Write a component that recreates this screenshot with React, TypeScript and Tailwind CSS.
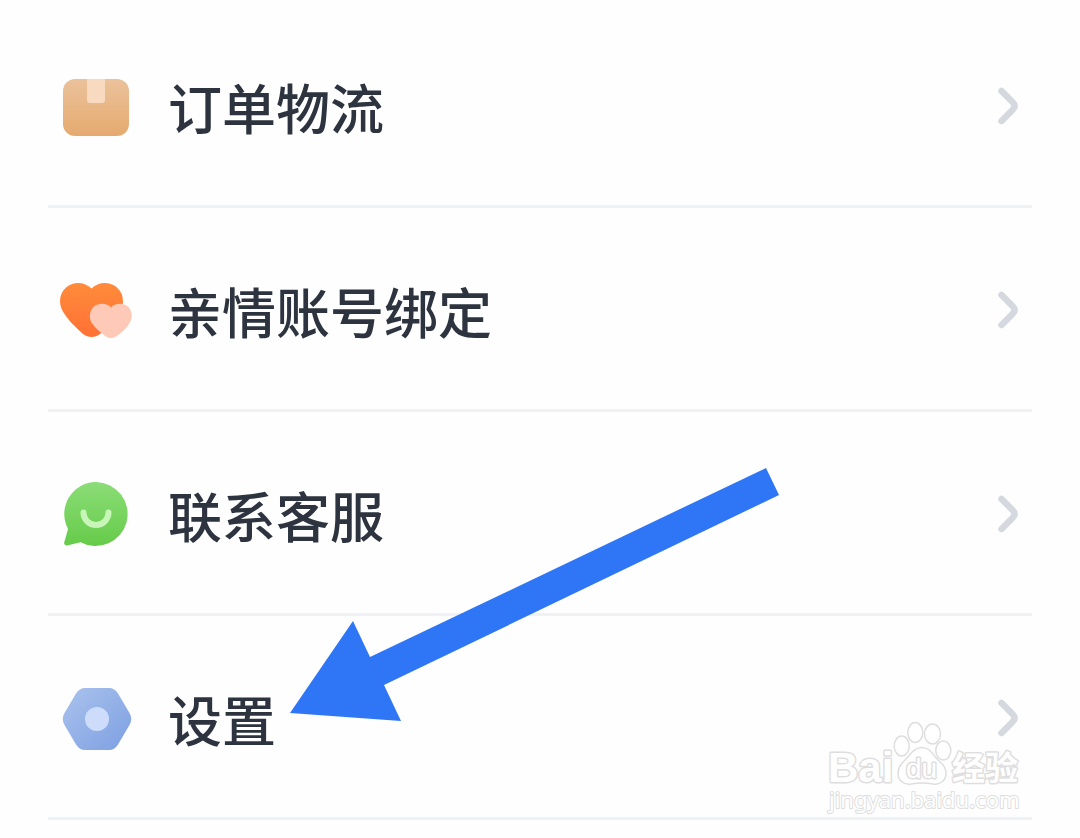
import type { ReactNode } from "react";

function BoxIcon() {
  return (
    <svg viewBox="0 0 72 72" className="size-18 shrink-0" aria-hidden="true">
      <defs>
        <linearGradient id="box" x1="0" y1="0" x2="0" y2="1">
          <stop offset="0" stopColor="#ebc29b" />
          <stop offset="1" stopColor="#e5aa6f" />
        </linearGradient>
      </defs>
      <rect x="3" y="8" width="66" height="57" rx="12" fill="url(#box)" />
      <path d="M27 8h18v21a3 3 0 0 1-3 3H30a3 3 0 0 1-3-3z" fill="#f8dac0" />
    </svg>
  );
}

function HeartsIcon() {
  return (
    <svg viewBox="0 0 72 72" className="size-18 shrink-0" aria-hidden="true">
      <defs>
        <linearGradient id="heart" x1="0" y1="0" x2="0" y2="1">
          <stop offset="0" stopColor="#ff8c3c" />
          <stop offset="1" stopColor="#ff7034" />
        </linearGradient>
      </defs>
      <path
        d="M31.500 13.500C25 6.500 13 6 6 12.500C-1.500 19.500-1.500 29.500 3.500 37.500C8 45 16 52.500 23 59C28 63 35 63 40 59C47 52.500 55 45 59.500 37.500C64.500 29.500 64.500 19.500 57 12.500C50 6 38 6.500 31.500 13.500Z"
        fill="url(#heart)"
      />
      <path
        d="M51 32.500C47 28 39 27.500 34 31.500C29 36 28.500 43.500 32.500 49C36 54 41 58 46 61.500C49.500 63.500 52.500 63.500 56 61.500C61 58 66 54 69 49C73 43.500 72.500 36 68 31.500C63 27.500 55 28 51 32.500Z"
        fill="#ffc9b7"
      />
    </svg>
  );
}

function ServiceIcon() {
  return (
    <svg viewBox="0 0 72 72" className="size-18 shrink-0" aria-hidden="true">
      <defs>
        <linearGradient id="service" x1="0" y1="0" x2="0" y2="1">
          <stop offset="0" stopColor="#8bdd77" />
          <stop offset="1" stopColor="#66cb49" />
        </linearGradient>
      </defs>
      <path
        d="M36 3a32 32 0 1 1-15.500 60.200L7 66.500a2.500 2.500 0 0 1-2.800-3L8 50A32 32 0 0 1 36 3z"
        fill="url(#service)"
      />
      <path
        d="M23.500 33.500a12.500 12.500 0 0 0 25 0"
        fill="none"
        stroke="#c8f5b8"
        strokeWidth="6"
        strokeLinecap="round"
      />
    </svg>
  );
}

function SettingsIcon() {
  return (
    <svg viewBox="0 0 72 72" className="size-18 shrink-0" aria-hidden="true">
      <defs>
        <linearGradient id="settings" x1="0" y1="0" x2="1" y2="1">
          <stop offset="0" stopColor="#aac3ed" />
          <stop offset="1" stopColor="#7d9fe2" />
        </linearGradient>
      </defs>
      <path
        d="M25 5H49Q54.500 5 58 10.500L69.500 30Q73 36 69.500 42L58 61.500Q54.500 67 49 67H25Q19.500 67 16 61.500L4.500 42Q1 36 4.500 30L16 10.500Q19.500 5 25 5Z"
        fill="url(#settings)"
      />
      <circle cx="37" cy="36" r="12" fill="#cddcfb" />
    </svg>
  );
}

function Chevron() {
  return (
    <svg viewBox="0 0 24 40" className="h-10 w-6 shrink-0" aria-hidden="true">
      <path
        d="M5.500 4L16.500 15Q20.500 19 16.500 23L5.500 34"
        fill="none"
        stroke="#d5d8de"
        strokeWidth="6.500"
        strokeLinecap="round"
        strokeLinejoin="round"
      />
    </svg>
  );
}

function Row({ icon, label }: { icon: ReactNode; label: string }) {
  return (
    <li className="flex min-h-51 border-b-3 border-[#f0f1f4]">
      <a href="#" className="flex flex-1 items-center gap-9 px-3 pt-[5px]">
        {icon}
        <span className="flex-1 text-[54px] leading-[72px] font-medium text-[#2d343f]">{label}</span>
        <Chevron />
      </a>
    </li>
  );
}

function PointerArrow() {
  return (
    <svg
      viewBox="0 0 490 254"
      className="pointer-events-none absolute top-[468px] left-[290px] h-[254px] w-[490px]"
      aria-hidden="true"
    >
      <path d="M0 245L63 153L80 189L476 0L489 27L94 217L111 253Z" fill="#2f76f6" />
    </svg>
  );
}

function Watermark() {
  return (
    <svg
      viewBox="820 715 210 105"
      className="pointer-events-none absolute top-[715px] left-[820px] h-[105px] w-[210px]"
      role="img"
      aria-label="Baidu 经验"
    >
      <g fill="#ffffff" stroke="#dedede" strokeWidth="1.500" strokeLinejoin="round">
        <ellipse cx="901.700" cy="746" rx="7.500" ry="10" />
        <ellipse cx="915.300" cy="732.500" rx="7.500" ry="10" />
        <ellipse cx="932.500" cy="734" rx="8" ry="10" />
        <ellipse cx="943.300" cy="750.500" rx="7.500" ry="9.500" />
        <path d="M922 747.500C930 747.500 933 755 938 760C943 764 946.500 768 946 774C945.500 781 940 785 933 784C925 782.500 919 782.500 911 784C903 785 898 780 898 773C898 767 902 763 906 759C911 754 914 747.500 922 747.500Z" />
      </g>
      <g stroke="#dedede" strokeWidth="3" strokeLinejoin="round" fill="#ffffff" paintOrder="stroke">
        <text x="828" y="782" className="font-['Liberation_Sans',sans-serif] text-[42px] font-bold">Bai</text>
        <text x="906" y="778" className="font-['Liberation_Sans',sans-serif] text-[28px]">du</text>
        <text x="952" y="780" className="font-['Noto_Sans_CJK_SC',sans-serif] text-[33px] font-bold">经验</text>
        <text x="829" y="808" strokeWidth="2" className="font-['Noto_Sans',sans-serif] text-[22px]">
          jingyan.baidu.com
        </text>
      </g>
    </svg>
  );
}

export default function App() {
  return (
    <main className="relative min-h-screen overflow-hidden bg-[#fefefe] px-12 pt-1 font-['Noto_Sans_CJK_SC',sans-serif]">
      <ul>
        <Row icon={<BoxIcon />} label="订单物流" />
        <Row icon={<HeartsIcon />} label="亲情账号绑定" />
        <Row icon={<ServiceIcon />} label="联系客服" />
        <Row icon={<SettingsIcon />} label="设置" />
      </ul>
      <PointerArrow />
      <Watermark />
    </main>
  );
}
